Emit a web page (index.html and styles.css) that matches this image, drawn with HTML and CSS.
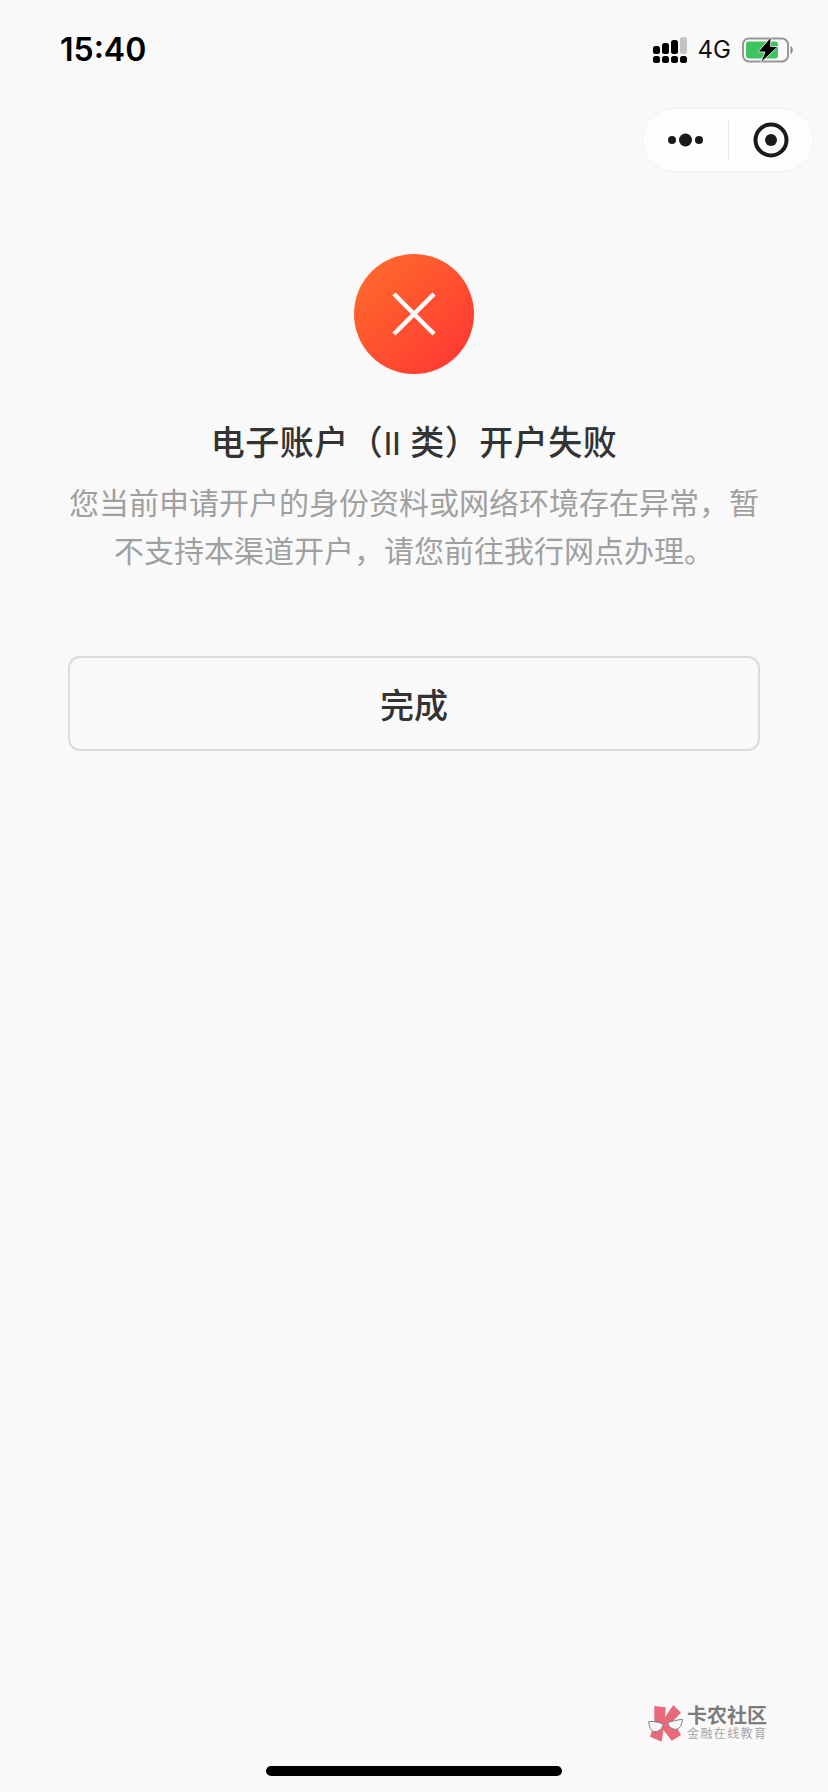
FILE: index.html
```html
<!DOCTYPE html>
<html lang="zh-CN">
<head>
<meta charset="utf-8">
<title>开户失败</title>
<link rel="stylesheet" href="styles.css">
</head>
<body>
<div class="page">
  <header class="status">
    <span class="time">15:40</span>
    <div class="status-right">
      <svg class="signal" width="34" height="26" viewBox="0 0 34 26">
        <rect x="0" y="9" width="7" height="8" rx="2.5" fill="#000"/>
        <rect x="9" y="6" width="7" height="11" rx="2.5" fill="#000"/>
        <rect x="18" y="3" width="7" height="14" rx="2.5" fill="#000"/>
        <rect x="27" y="0" width="7" height="17" rx="2.5" fill="#c4c4c4"/>
        <rect x="0" y="19" width="7" height="7" rx="2.5" fill="#000"/>
        <rect x="9" y="19" width="7" height="7" rx="2.5" fill="#000"/>
        <rect x="18" y="19" width="7" height="7" rx="2.5" fill="#000"/>
        <rect x="27" y="19" width="7" height="7" rx="2.5" fill="#000"/>
      </svg>
      <span class="net">4G</span>
      <svg class="battery" width="53" height="26" viewBox="0 0 53 26">
        <rect x="2" y="1.5" width="45" height="23" rx="6" fill="none" stroke="#979797" stroke-width="2"/>
        <rect x="5" y="4.5" width="32" height="17" rx="3" fill="#3dc45f"/>
        <path d="M49.5 9 C52.5 10 52.5 16 49.5 17 Z" fill="#8a8a8a"/>
        <path d="M30 0 L17 15 H24 L19.5 26 L37 9.5 H29.5 Z" fill="#000" stroke="#f9f9f9" stroke-width=".8"/>
      </svg>
    </div>
  </header>

  <div class="nav">
    <div class="capsule">
      <div class="capsule-cell">
        <svg width="37" height="16" viewBox="0 0 37 16">
          <circle cx="5" cy="8" r="4" fill="#1a1a1a"/>
          <circle cx="18.5" cy="8" r="6.5" fill="#1a1a1a"/>
          <circle cx="32" cy="8" r="4" fill="#1a1a1a"/>
        </svg>
      </div>
      <div class="capsule-line"></div>
      <div class="capsule-cell">
        <svg width="36" height="36" viewBox="0 0 36 36">
          <circle cx="18" cy="18" r="15.5" fill="none" stroke="#1a1a1a" stroke-width="4"/>
          <circle cx="18" cy="18" r="6" fill="#1a1a1a"/>
        </svg>
      </div>
    </div>
  </div>

  <main class="result">
    <div class="icon-fail">
      <svg width="44" height="44" viewBox="0 0 44 44">
        <path d="M2 2 L42 42 M42 2 L2 42" fill="none" stroke="#fff" stroke-width="4.5"/>
      </svg>
    </div>
    <h1 class="title">电子账户（<span class="roman">II</span> 类）开户失败</h1>
    <p class="desc">您当前申请开户的身份资料或网络环境存在异常，暂不支持本渠道开户，请您前往我行网点办理。</p>
    <button class="done">完成</button>
  </main>

  <div class="watermark">
    <svg width="36" height="37" viewBox="0 0 36 37">
      <path d="M6.3 1 L17.7 2.3 L17 12.3 L25.3 0 L33 7.7 L25.3 15.7 L33 30 L23.7 35.7 L15.5 25 L13.7 36.7 L2 31.7 L6.3 18.3 Z" fill="#e8697a"/>
      <path d="M.7 16.7 C5 16 10 17 15.3 19 C14 24 11 26.7 7 26.7 C3 26.7 1 21.5 .7 16.7 Z" fill="#f6f6f6" stroke="#7d7d7d" stroke-width="1"/>
      <path d="M19.7 17.7 C24 16 29 15 34.3 14.3 C34 20 31.5 24.3 27.7 24.3 C23.5 24.3 20.5 21.5 19.7 17.7 Z" fill="#f6f6f6" stroke="#7d7d7d" stroke-width="1"/>
    </svg>
    <div class="wm-text">
      <span class="wm-name">卡农社区</span>
      <span class="wm-sub">金融在线教育</span>
    </div>
  </div>
  <div class="home-bar"></div>
</div>
</body>
</html>
```

FILE: styles.css
```css
* { box-sizing: border-box; }
html, body { margin: 0; padding: 0; }
body {
  background: #f9f9f9;
  font-family: "Liberation Sans", "Noto Sans CJK SC", sans-serif;
}
.page {
  position: relative;
  width: 828px;
  height: 1792px;
  overflow: hidden;
  background: #f9f9f9;
}
.status {
  height: 108px;
  padding: 33px 34px 0 60px;
  display: flex;
  justify-content: space-between;
  align-items: flex-start;
}
.time {
  font-family: Inter, "Liberation Sans", sans-serif;
  font-size: 32px;
  font-weight: 600;
  line-height: 34px;
  color: #000;
}
.status-right {
  display: flex;
  align-items: center;
  height: 28px;
  margin-top: 3px;
}
.signal { display: block; }
.net {
  font-family: Inter, "Liberation Sans", sans-serif;
  font-size: 24px;
  line-height: 28px;
  color: #111;
  margin: 0 10px 0 11px;
}
.battery { display: block; }
.nav {
  display: flex;
  justify-content: flex-end;
  padding-right: 14px;
}
.capsule {
  width: 172px;
  height: 64px;
  border-radius: 32px;
  background: #fdfdfd;
  border: 1px solid #f1f1f1;
  display: flex;
  align-items: center;
}
.capsule-cell {
  flex: 1;
  display: flex;
  justify-content: center;
  align-items: center;
}
.capsule-cell svg { display: block; }
.capsule-line {
  width: 1px;
  height: 40px;
  background: #e6e6e6;
}
.result {
  padding: 82px 68px 0;
  display: flex;
  flex-direction: column;
  align-items: center;
}
.icon-fail {
  width: 120px;
  height: 120px;
  border-radius: 50%;
  background: linear-gradient(135deg, #ff6f2c 0%, #ff3333 100%);
  display: flex;
  align-items: center;
  justify-content: center;
}
.icon-fail svg { display: block; }
.title {
  margin: 48px 0 0;
  font-size: 34px;
  font-weight: 500;
  letter-spacing: 0.5px;
  line-height: 42px;
  color: #333;
  white-space: nowrap;
}
.roman {
  font-weight: 400;
  letter-spacing: -1px;
}
.desc {
  margin: 16px 0 0;
  width: 692px;
  font-size: 30px;
  line-height: 48px;
  color: #a0a0a0;
  text-align: center;
}
.done {
  margin-top: 80px;
  width: 692px;
  height: 95px;
  border: 2px solid #dcdcdc;
  border-radius: 12px;
  background: #f9f9f9;
  font-family: inherit;
  font-size: 34px;
  font-weight: 500;
  color: #333;
  padding: 0;
}
.watermark {
  position: absolute;
  left: 648px;
  top: 1704px;
  display: flex;
  align-items: center;
  gap: 3px;
}
.watermark svg { display: block; }
.wm-text {
  display: flex;
  flex-direction: column;
  padding-top: 2px;
}
.wm-name {
  font-size: 20px;
  line-height: 21px;
  font-weight: 700;
  color: #7c7c7c;
  white-space: nowrap;
}
.wm-sub {
  font-size: 12px;
  line-height: 15px;
  letter-spacing: 1.4px;
  color: #a6a6a6;
  white-space: nowrap;
}
.home-bar {
  position: absolute;
  left: 266px;
  top: 1766px;
  width: 296px;
  height: 10px;
  border-radius: 5px;
  background: #000;
}
```
